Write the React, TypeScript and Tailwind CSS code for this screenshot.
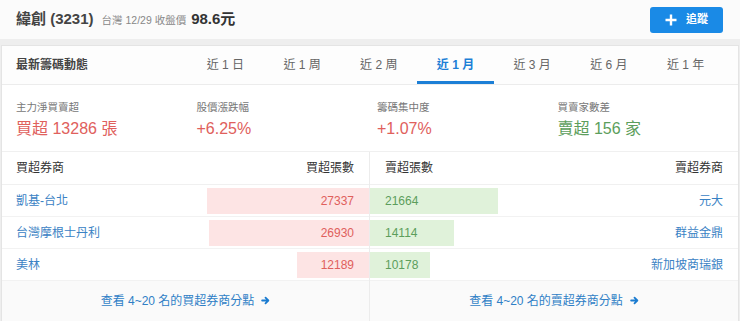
import React from "react";

const font = { fontFamily: '"Liberation Sans", "Noto Sans CJK TC", sans-serif' };

const tabs = ["近 1 日", "近 1 周", "近 2 周", "近 1 月", "近 3 月", "近 6 月", "近 1 年"];
const buys = [
  { name: "凱基-台北", v: 27337 },
  { name: "台灣摩根士丹利", v: 26930 },
  { name: "美林", v: 12189 },
];
const sells = [
  { name: "元大", v: 21664 },
  { name: "群益金鼎", v: 14114 },
  { name: "新加坡商瑞銀", v: 10178 },
];
const MAX = 27337;
const SCALE = 162;

function Arrow() {
  return (
    <svg width="9" height="9" viewBox="0 0 12 12" className="ml-[7px] inline-block">
      <path d="M1.5 6h8M6 2.2L9.8 6 6 9.8" stroke="#1a7bd0" strokeWidth="2.4" fill="none" strokeLinecap="round" strokeLinejoin="round" />
    </svg>
  );
}

export default function App() {
  return (
    <div style={font} className="w-[740px] h-[321px] overflow-hidden bg-[#eeeeee]">
      {/* header */}
      <div className="h-[39px] bg-[#fbfbfb] flex items-center pl-4 pr-[17px]">
        <span className="text-[15px] font-bold text-[#444]">緯創 (3231)</span>
        <span className="ml-[8px] text-[10.5px] text-[#888] mt-[2px]">台灣 12/29 收盤價</span>
        <span className="ml-[5px] text-[15px] font-bold text-[#333]">98.6元</span>
        <div className="flex-1" />
        <button className="w-[73px] h-[26px] rounded-[3px] bg-[#1a8ae6] flex items-center justify-center gap-[9px] text-white text-[11px] font-bold">
          <svg width="12" height="12" viewBox="0 0 12 12">
            <path d="M6 0.5v11M0.5 6h11" stroke="white" strokeWidth="2.4" />
          </svg>
          追蹤
        </button>
      </div>
      {/* card */}
      <div className="mt-[6px] mx-px border border-[#e4e4e4] bg-[#fdfdfd]">
        {/* title row */}
        <div className="h-[39px] flex items-stretch pl-[14px] pr-[14px] border-b border-[#ececec]">
          <div className="flex-1 flex items-center text-[12px] font-bold text-[#444]">最新籌碼動態</div>
          <div className="w-[537px] grid grid-cols-7">
            {tabs.map((t, i) => (
              <div
                key={t}
                className={
                  i === 3
                    ? "flex items-center justify-center text-[12px] font-bold text-[#1c7fd6] border-b-[3px] border-[#1c7fd6] pt-[3px]"
                    : "flex items-center justify-center text-[12px] text-[#666]"
                }
              >
                {t}
              </div>
            ))}
          </div>
        </div>
        {/* stats */}
        <div className="h-[66px] pl-[14px] grid grid-cols-4 pt-[16px] bg-white">
          {[
            { l: "主力淨買賣超", v: "買超 13286 張", c: "text-[#e0605c]" },
            { l: "股價漲跌幅", v: "+6.25%", c: "text-[#e0605c]" },
            { l: "籌碼集中度", v: "+1.07%", c: "text-[#e0605c]" },
            { l: "買賣家數差", v: "賣超 156 家", c: "text-[#5c9e5c]" },
          ].map((s) => (
            <div key={s.l} className="flex flex-col">
              <span className="text-[10.5px] leading-[12px] text-[#777]">{s.l}</span>
              <span className={"text-[16px] leading-[20px] mt-[6px] " + s.c}>{s.v}</span>
            </div>
          ))}
        </div>
        {/* table */}
        <div className="grid grid-cols-2 border-t border-[#f0f0f0] bg-white">
          <div className="border-r border-[#ececec]">
            <div className="h-[33px] flex items-center justify-between pl-[14px] pr-[15px] text-[12px] text-[#333] border-b border-[#f0f0f0]">
              <span>買超券商</span>
              <span>買超張數</span>
            </div>
            {buys.map((b) => (
              <div key={b.name} className="h-[32px] relative flex items-center pl-[14px] border-b border-[#f2f2f2]">
                <span className="text-[12px] text-[#3a82c4] flex-1">{b.name}</span>
                <div
                  className="h-[26px] bg-[#fde4e4] flex items-center justify-end pr-[15px] text-[12px] text-[#e0605c]"
                  style={{ width: Math.round((b.v / MAX) * SCALE) + "px" }}
                >
                  {b.v}
                </div>
              </div>
            ))}
            <div className="h-[40px] bg-[#fafafa] flex items-center justify-center text-[12px] text-[#2f7fc6] pb-[1px]">
              查看 4~20 名的買超券商分點
              <Arrow />
            </div>
          </div>
          <div>
            <div className="h-[33px] flex items-center justify-between pl-[15px] pr-[15px] text-[12px] text-[#333] border-b border-[#f0f0f0]">
              <span>賣超張數</span>
              <span>賣超券商</span>
            </div>
            {sells.map((b) => (
              <div key={b.name} className="h-[32px] flex items-center pr-[15px] border-b border-[#f2f2f2]">
                <div
                  className="h-[26px] bg-[#e0f2da] flex items-center pl-[15px] text-[12px] text-[#5c9e5c] whitespace-nowrap"
                  style={{ width: Math.round((b.v / MAX) * SCALE) + "px" }}
                >
                  {b.v}
                </div>
                <span className="flex-1 text-right text-[12px] text-[#3a82c4]">{b.name}</span>
              </div>
            ))}
            <div className="h-[40px] bg-[#fafafa] flex items-center justify-center text-[12px] text-[#2f7fc6] pb-[1px]">
              查看 4~20 名的賣超券商分點
              <Arrow />
            </div>
          </div>
        </div>
      </div>
    </div>
  );
}
